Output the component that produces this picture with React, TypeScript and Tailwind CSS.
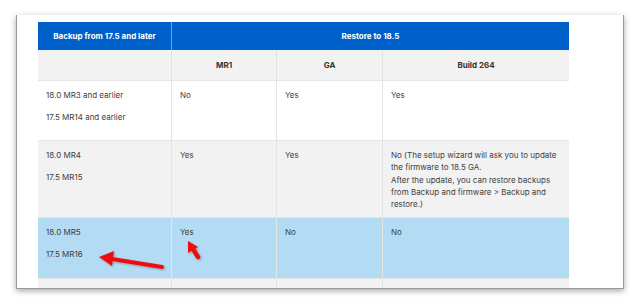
export default function App() {
  const rows = [
    {
      id: 1,
      bg: "bg-white",
      h: "h-[60px]",
      versions: ["18.0 MR3 and earlier", "17.5 MR14 and earlier"],
      mr1: "No",
      ga: "Yes",
      build: ["Yes"],
    },
    {
      id: 2,
      bg: "bg-[#f2f2f2]",
      h: "h-[77px]",
      versions: ["18.0 MR4", "17.5 MR15"],
      mr1: "Yes",
      ga: "Yes",
      build: [
        "No (The setup wizard will ask you to update the firmware to 18.5 GA.",
        "After the update, you can restore backups from Backup and firmware > Backup and restore.)",
      ],
    },
    {
      id: 3,
      bg: "bg-[#b3dcf4]",
      h: "h-[61px]",
      versions: ["18.0 MR5", "17.5 MR16"],
      mr1: "Yes",
      ga: "No",
      build: ["No"],
    },
  ];

  const cell = "border-r border-[#e4e4e4] px-2 pt-[8px] last:border-r-0";

  return (
    <div className="relative w-[640px] h-[305px] bg-white overflow-hidden pl-[16px] pt-[15px] font-['Inter',sans-serif] text-[8px] text-[#404040]">
      {/* card */}
      <div className="w-[608px] h-[274px] bg-white overflow-hidden border-x border-b border-[#9a9a9a] shadow-[0_2px_6px_rgba(0,0,0,0.35)] pl-[21px] pt-[7px]">
        <div className="w-[531px]">
          {/* header */}
          <div className="grid grid-cols-[134px_397px] h-[28px] bg-[#0060ca] text-white font-bold">
            <div className="flex items-center justify-center border-r border-[#6fa2e0]">
              Backup from 17.5 and later
            </div>
            <div className="flex items-center justify-center">Restore to 18.5</div>
          </div>
          {/* subheader */}
          <div className="grid grid-cols-[134px_105px_106px_186px] h-[30px] bg-[#f2f2f2] font-bold text-[#333]">
            <div className="border-r border-[#e2e2e2]" />
            <div className="flex items-center justify-center border-r border-[#e2e2e2]">MR1</div>
            <div className="flex items-center justify-center border-r border-[#e2e2e2]">GA</div>
            <div className="flex items-center justify-center">Build 264</div>
          </div>
          {rows.map((row) => (
            <div
              key={row.id}
              className={`grid grid-cols-[134px_105px_106px_186px] ${row.h} ${row.bg} border-t border-[#e6e6e6]`}
            >
              <div className={`${cell} flex flex-col gap-[10px] leading-[12px]`}>
                {row.versions.map((v) => (
                  <p key={v}>{v}</p>
                ))}
              </div>
              <div className={`${cell} leading-[12px]`}>{row.mr1}</div>
              <div className={`${cell} leading-[12px]`}>{row.ga}</div>
              <div className={`${cell} leading-[12.3px] pr-3`}>
                {row.build.map((b) => (
                  <p key={b}>{b}</p>
                ))}
              </div>
            </div>
          ))}
          <div className="grid grid-cols-[134px_105px_106px_186px] h-[20px] bg-[#f2f2f2] border-t border-[#e6e6e6]">
            <div className="border-r border-[#e2e2e2]" />
            <div className="border-r border-[#e2e2e2]" />
            <div className="border-r border-[#e2e2e2]" />
            <div />
          </div>
        </div>
      </div>

      {/* red arrows */}
      <svg className="absolute inset-0 pointer-events-none" width="640" height="305" viewBox="0 0 640 305">
        <defs>
          <filter id="sh" x="-20%" y="-50%" width="140%" height="200%">
            <feDropShadow dx="1" dy="1" stdDeviation="1" floodColor="#000" floodOpacity="0.3" />
          </filter>
        </defs>
        <g filter="url(#sh)" fill="#ee1111" stroke="none">
          <line x1="162" y1="267" x2="112" y2="259" stroke="#ee1111" strokeWidth="4" strokeLinecap="round" />
          <polygon points="99,257 114,251 112,266" />
          <line x1="193" y1="249" x2="198" y2="257" stroke="#ee1111" strokeWidth="4.5" strokeLinecap="round" />
          <polygon points="188,241 198,247 188,253" />
        </g>
      </svg>
    </div>
  );
}
